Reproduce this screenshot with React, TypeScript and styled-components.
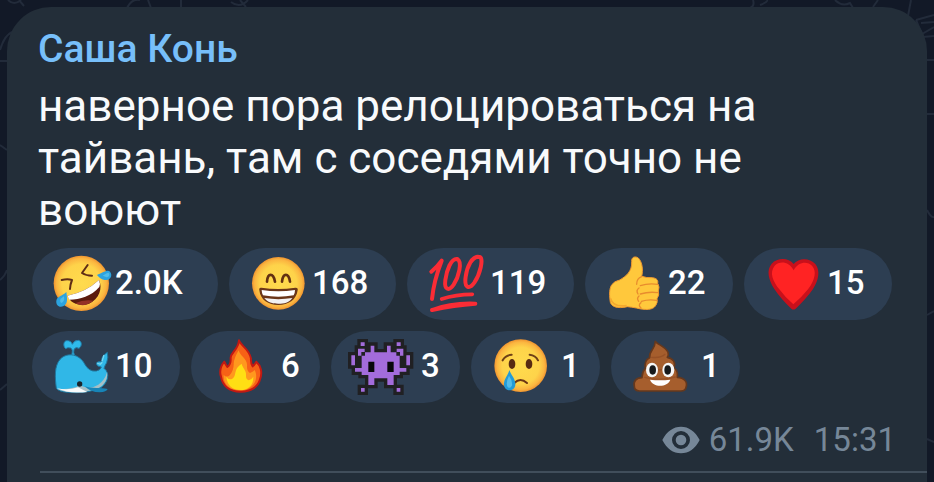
import React from "react";
import styled, { createGlobalStyle } from "styled-components";

const GlobalStyle = createGlobalStyle`
  * { box-sizing: border-box; }
  body {
    margin: 0;
    background: #121927;
    font-family: Roboto, "Noto Sans", sans-serif;
    overflow: hidden;
  }
`;

const Chat = styled.main`
  position: relative;
  display: flex;
  min-height: 100vh;
  padding: 7px 7px 0;
`;

const Wallpaper = styled.svg`
  position: absolute;
  inset: 0;
  width: 100%;
  height: 100%;
  fill: none;
  stroke: #222b3a;
  stroke-width: 2;
`;

const Bubble = styled.article`
  position: relative;
  flex: 1;
  min-width: 0;
  padding-top: 20px;
  border-radius: 44px 44px 0 0;
  background: #232e39;
`;

const Author = styled.h1`
  margin: 0 31px 9px;
  color: #77bffa;
  font-size: 39px;
  font-weight: 500;
  line-height: 44px;
`;

const Message = styled.p`
  margin: 0 31px 12px;
  max-width: 780px;
  color: #f8fafc;
  font-size: 44px;
  line-height: 52px;
`;

const Reactions = styled.div`
  display: flex;
  flex-wrap: wrap;
  gap: 11px;
  margin: 0 25px;
`;

const Reaction = styled.button<{ $chars: number }>`
  display: flex;
  align-items: center;
  flex: none;
  width: ${(p) => 110 + p.$chars * 19}px;
  height: 72px;
  padding: 0 0 0 14px;
  border: 0;
  border-radius: 36px;
  background: #2d3e52;
  color: #fff;
  font: inherit;
  cursor: pointer;
`;

const Emoji = styled.svg`
  flex: none;
  width: 68px;
  height: 72px;
  overflow: visible;
`;

const Count = styled.span<{ $single: boolean }>`
  padding: 0 0 2px ${(p) => (p.$single ? 8 : 1)}px;
  font-size: 33px;
  font-weight: 500;
  line-height: 40px;
`;

const Meta = styled.footer`
  display: flex;
  align-items: center;
  justify-content: flex-end;
  margin: 17px 31px 11px;
  color: #768798;
  font-size: 33px;
  line-height: 40px;
`;

const EyeIcon = styled.svg`
  width: 38px;
  height: 28px;
  margin-right: 9px;
  fill: currentColor;
`;

const Time = styled.time`
  margin-left: 20px;
`;

const Divider = styled.hr`
  height: 2px;
  margin: 0 0 0 33px;
  border: 0;
  background: #414e5b;
`;

const FaceGradient = ({ id }: { id: string }) => (
  <radialGradient id={id}>
    <stop offset="0" stopColor="#ffdb4d" />
    <stop offset="0.7" stopColor="#fed34a" />
    <stop offset="0.9" stopColor="#fbb540" />
    <stop offset="1" stopColor="#ef9430" />
  </radialGradient>
);

const Rofl = () => (
  <>
    <defs><FaceGradient id="rofl" /></defs>
    <circle cx="154" cy="130" r="83" fill="url(#rofl)" />
    <path d="M173 75L156 99Q168 107 186 107" fill="none" stroke="#5f2d16" strokeWidth="6" strokeLinecap="round" strokeLinejoin="round" />
    <path d="M95 120Q113 116 126 120Q121 132 120 147" fill="none" stroke="#5f2d16" strokeWidth="6" strokeLinecap="round" strokeLinejoin="round" />
    <path d="M112 167Q167 157 207 120C219 145 207 178 177 191C150 201 121 190 112 167Z" fill="#5b1b0d" />
    <path d="M112 167Q167 157 207 120Q212 132 208 141C183 169 151 179 118 179Z" fill="#fff" />
    <path d="M135 190Q163 177 190 182Q163 204 135 190Z" fill="#943026" />
    <path d="M201 105C216 99 233 87 240 95C250 108 239 122 224 120Q212 118 201 105Z" fill="#2ca3df" />
    <path d="M218 107Q231 98 236 98Q242 108 230 112Z" fill="#50bce9" />
    <path d="M109 156C112 176 114 191 101 198C88 205 77 195 79 182C81 169 96 169 109 156Z" fill="#2ca3df" />
    <path d="M102 169Q105 185 94 189Q88 185 92 176Z" fill="#50bce9" />
  </>
);

const Grin = () => (
  <>
    <defs><FaceGradient id="grin" /></defs>
    <circle cx="160" cy="130" r="79" fill="url(#grin)" />
    <path d="M126 125C128 98 145 98 150 125M171 125C174 98 191 98 195 125" fill="none" stroke="#633012" strokeWidth="8" strokeLinecap="round" />
    <path d="M109 143Q160 151 211 143Q220 142 218 151C214 180 190 195 160 195C130 195 106 180 103 151Q101 142 109 143Z" fill="#6b3619" />
    <path d="M110 150Q160 158 210 150Q210 159 206 166Q160 174 114 166Q110 158 110 150Z" fill="#fff" />
    <path d="M118 174Q160 181 202 174C191 189 178 191 160 191C142 191 128 187 118 174Z" fill="#f2f2f2" />
  </>
);

const Hundred = () => (
  <g fill="none" stroke="#fa2c35" strokeLinecap="round" strokeLinejoin="round">
    <path d="M94 95Q112 80 125 62C112 95 100 136 96 177" strokeWidth="12" />
    <path d="M172 57C153 54 140 91 136 120C132 152 148 153 161 134C176 111 188 66 172 57" strokeWidth="12" />
    <path d="M237 51C217 47 201 80 197 110C192 145 208 149 223 128C240 103 252 55 239 51" strokeWidth="12" />
    <path d="M125 177Q167 163 217 163" strokeWidth="11" />
    <path d="M96 210Q155 188 226 191Q163 195 96 210" strokeWidth="12" />
  </g>
);

const Thumb = () => (
  <>
    <path d="M155 65C154 50 166 48 175 54C187 66 190 91 185 109Q199 114 217 113C231 115 235 121 233 130Q240 141 235 153Q239 165 231 176Q234 188 226 198C218 210 197 211 169 204Q154 201 142 200C113 207 90 201 90 180Q86 151 94 136Q103 123 119 120C138 109 157 94 155 65Z" fill="#ffc83c" stroke="#ef9830" strokeWidth="3" />
    <path d="M185 110Q170 115 170 133M177 144Q167 151 174 162M177 168Q169 175 176 184M183 188Q173 195 183 204M181 137Q205 129 233 133M181 162Q207 154 234 158M184 184Q206 177 230 181" fill="none" stroke="#e88c2e" strokeWidth="4" strokeLinecap="round" />
    <path d="M92 175Q97 202 140 197" fill="none" stroke="#f3a92f" strokeWidth="5" />
  </>
);

const Heart = () => (
  <>
    <path d="M161 72C145 52 112 53 95 71C78 91 86 120 103 147Q123 177 154 206Q160 211 167 206Q199 176 219 147C237 119 241 91 226 72C209 53 176 53 161 72Z" fill="#c8101b" />
    <path d="M161 91C148 64 119 61 104 77C87 98 99 124 118 148Q137 174 160 193Q184 173 204 148C225 120 231 93 216 77C202 62 174 65 161 91Z" fill="#ff2323" />
  </>
);

const Whale = () => (
  <>
    <path d="M124 93Q131 73 122 69Q113 66 107 71C98 63 101 47 110 47Q123 46 127 58Q133 45 145 46C156 48 157 63 147 70Q137 64 132 73Q129 82 134 93Z" fill="#2fbaea" stroke="#237fab" strokeWidth="3" />
    <path d="M79 190C75 158 72 123 91 102C113 80 149 88 164 117Q177 141 199 138Q212 135 214 126Q197 124 200 113Q206 108 215 110C213 94 226 87 232 82Q236 98 230 113Q225 120 222 130C242 145 233 174 213 188Q171 207 112 202Q87 200 79 190Z" fill="#30b7e7" stroke="#20749b" strokeWidth="3" />
    <path d="M231 141C235 160 223 181 204 190Q160 206 108 200Q91 197 80 191Q120 196 150 181Q178 196 205 179Q226 164 231 141Z" fill="#a5bfc6" />
    <path d="M81 190Q115 197 144 187L172 201Q116 207 81 190Z" fill="#f7f9fa" />
    <path d="M164 184C187 192 211 187 233 192Q230 201 209 202Q182 202 164 184Z" fill="#1784b7" />
    <circle cx="149" cy="177" r="8" fill="#19242b" />
    <path d="M201 114L211 118L217 112M222 90L216 109" fill="none" stroke="#79d6ef" strokeWidth="4" />
  </>
);

const Fire = () => (
  <>
    <path d="M147 46C151 62 178 71 183 101Q182 116 188 124Q196 117 199 110C213 122 217 142 211 160C205 186 182 201 151 200C117 200 97 181 93 155C88 140 93 122 103 110Q106 117 112 126Q123 118 122 101C119 83 144 78 147 46Z" fill="#f76116" stroke="#c21913" strokeWidth="6" strokeLinejoin="round" />
    <path d="M146 76C150 94 174 101 171 125Q171 138 180 144Q191 140 194 135C206 158 194 189 162 195C126 201 98 180 101 150Q111 159 119 151Q132 136 131 116Q132 99 146 76Z" fill="#ff981e" />
    <path d="M155 116C157 128 170 137 168 150Q167 163 176 166Q185 164 190 155C191 182 173 195 152 195C128 195 111 181 109 155Q116 166 126 162Q134 157 136 143Q138 127 155 116Z" fill="#ffdf14" />
  </>
);

const invaderShape =
  "M120 92V82H137V62H148V82H186V62H197V82H214V92H224V129H244V140H224V150H206V180H187V160H148V180H130V150H110V140H90V129H110V92Z" +
  "M107 52H119V63H107ZM215 52H227V63H215Z" +
  "M99 71H119V81H109V92H99ZM215 71H235V92H225V81H215Z" +
  "M79 91H90V121H79ZM244 91H255V121H244Z" +
  "M108 189H119V200H108ZM215 189H226V200H215Z";

const Invader = () => (
  <>
    <path d={invaderShape} fill="#202023" stroke="#202023" strokeWidth="20" />
    <path d={invaderShape} fill="#a36cdb" />
    <path d="M130 110H148V141H130ZM187 110H206V141H187Z" fill="#08080b" />
  </>
);

const Cry = () => (
  <>
    <defs><FaceGradient id="cry" /></defs>
    <circle cx="167" cy="122" r="79" fill="url(#cry)" />
    <path d="M113 106Q121 91 140 89M194 89Q212 91 219 106" fill="none" stroke="#704117" strokeWidth="6" strokeLinecap="round" />
    <ellipse cx="141" cy="117" rx="10" ry="15" fill="#572a12" />
    <ellipse cx="192" cy="117" rx="10" ry="15" fill="#572a12" />
    <path d="M148 174Q166 156 186 174" fill="none" stroke="#6d3615" strokeWidth="6" strokeLinecap="round" />
    <path d="M133 135C138 151 152 161 151 179C149 201 119 201 117 180C116 161 129 152 133 135Z" fill="#239bd8" />
    <path d="M132 152Q143 167 141 181Q136 193 128 186Q121 174 132 152Z" fill="#54bde8" />
  </>
);

const Poop = () => (
  <>
    <path d="M571 49C576 58 603 65 609 82Q612 91 607 97C625 100 633 114 627 128Q640 138 637 157C658 158 669 171 663 187Q661 198 648 198H524Q508 198 508 184C504 169 514 158 531 158C532 149 531 140 541 130C539 119 541 104 554 98C550 79 570 76 571 49Z" fill="#a65e2d" stroke="#65381d" strokeWidth="5" strokeLinejoin="round" />
    <path d="M560 97Q588 100 600 88M548 130Q581 139 615 130M539 157Q584 169 631 156" fill="none" stroke="#975126" strokeWidth="4" strokeLinecap="round" />
    <ellipse cx="561" cy="135" rx="18" ry="22" fill="#f6f6f6" />
    <ellipse cx="610" cy="135" rx="18" ry="22" fill="#f6f6f6" />
    <ellipse cx="563" cy="135" rx="10" ry="14" fill="#17191b" />
    <ellipse cx="608" cy="135" rx="10" ry="14" fill="#17191b" />
    <path d="M555 164Q585 168 616 164C607 188 564 188 555 164Z" fill="#fff" />
  </>
);

const reactions = [
  { name: "смех до слёз", count: "2.0K", box: "48 24 204 216", Art: Rofl },
  { name: "улыбка", count: "168", box: "54 24 204 216", Art: Grin },
  { name: "сто баллов", count: "119", box: "63 24 204 216", Art: Hundred },
  { name: "палец вверх", count: "22", box: "57 24 204 216", Art: Thumb },
  { name: "сердце", count: "15", box: "54 24 204 216", Art: Heart },
  { name: "кит", count: "10", box: "48 18 204 216", Art: Whale },
  { name: "огонь", count: "6", box: "45 18 204 216", Art: Fire },
  { name: "пришелец", count: "3", box: "60 18 204 216", Art: Invader },
  { name: "слеза", count: "1", box: "60 18 204 216", Art: Cry },
  { name: "какашка", count: "1", box: "480 18 204 216", Art: Poop },
];

export default function App() {
  return (
    <>
      <GlobalStyle />
      <Chat>
        <Wallpaper viewBox="0 0 934 482" preserveAspectRatio="xMidYMin slice" aria-hidden="true">
          <path d="M8 0Q14 6 21 0M19 0L24 6M0 50Q4 36 12 32M0 61H7M127 8Q132 -2 140 0M148 0L151 8M181 0V8M231 2Q240 9 248 0M240 0L246 7" />
          <path d="M750 8Q755 6 753 0M760 5Q768 2 767 0M835 0Q842 7 850 3L853 8M873 7L878 0M911 0L908 16M916 20L934 15M916 20L923 37L934 36M921 23L934 22M922 34L934 27M927 60H934M927 114H934M927 315L934 311M927 439L934 442M927 210Q931 218 934 217M0 145L7 150M0 280Q5 276 7 270M0 390L7 384" />
        </Wallpaper>
        <Bubble>
          <Author>Саша Конь</Author>
          <Message>наверное пора релоцироваться на тайвань, там с соседями точно не воюют</Message>
          <Reactions>
            {reactions.map(({ name, count, box, Art }) => (
              <Reaction key={name} type="button" $chars={count.length} aria-label={`${name}: ${count}`}>
                <Emoji viewBox={box} aria-hidden="true">
                  <Art />
                </Emoji>
                <Count $single={count.length === 1}>{count}</Count>
              </Reaction>
            ))}
          </Reactions>
          <Meta>
            <EyeIcon viewBox="62 62 114 84" aria-hidden="true">
              <path
                fillRule="evenodd"
                d="M63 104C76 78 96 64 119 64C142 64 162 78 175 104C162 130 142 144 119 144C96 144 76 130 63 104ZM119 77A27 27 0 1 0 119 131A27 27 0 1 0 119 77Z"
              />
              <circle cx="119" cy="104" r="16" />
            </EyeIcon>
            <span>61.9K</span>
            <Time>15:31</Time>
          </Meta>
          <Divider />
        </Bubble>
      </Chat>
    </>
  );
}
